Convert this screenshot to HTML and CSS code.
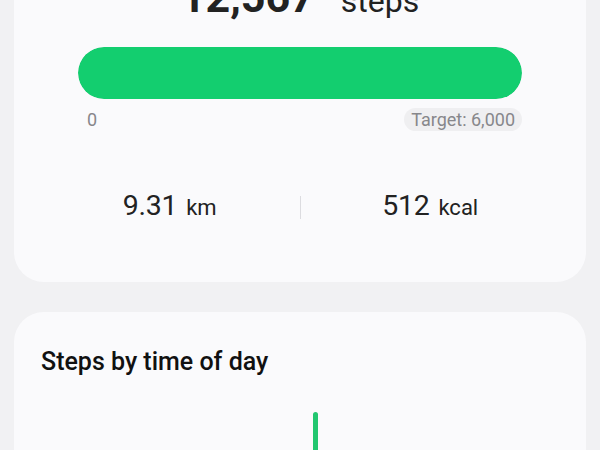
FILE: index.html
```html
<!DOCTYPE html>
<html>
<head>
<meta charset="utf-8">
<link rel="stylesheet" href="styles.css">
</head>
<body>
<div class="screen">
  <section class="card summary">
    <div class="total"><span class="total-num">12,567</span><span class="total-unit">steps</span></div>
    <div class="progress"><div class="progress-fill" style="width:100%"></div></div>
    <div class="scale">
      <span class="scale-min">0</span>
      <span class="target">Target: 6,000</span>
    </div>
    <div class="stats">
      <div class="stat"><span class="stat-num">9.31</span><span class="stat-unit">km</span></div>
      <div class="divider"></div>
      <div class="stat"><span class="stat-num">512</span><span class="stat-unit">kcal</span></div>
    </div>
  </section>
  <section class="card chart-card">
    <h2 class="chart-title">Steps by time of day</h2>
    <div class="chart">
      <div class="bar" style="height:4px"></div>
      <div class="bar" style="height:4px"></div>
      <div class="bar" style="height:4px"></div>
      <div class="bar" style="height:4px"></div>
      <div class="bar" style="height:4px"></div>
      <div class="bar" style="height:4px"></div>
      <div class="bar" style="height:8px"></div>
      <div class="bar" style="height:14px"></div>
      <div class="bar" style="height:20px"></div>
      <div class="bar" style="height:26px"></div>
      <div class="bar" style="height:30px"></div>
      <div class="bar" style="height:24px"></div>
      <div class="bar" style="height:185px"></div>
      <div class="bar" style="height:34px"></div>
      <div class="bar" style="height:22px"></div>
      <div class="bar" style="height:18px"></div>
      <div class="bar" style="height:28px"></div>
      <div class="bar" style="height:36px"></div>
      <div class="bar" style="height:30px"></div>
      <div class="bar" style="height:16px"></div>
      <div class="bar" style="height:10px"></div>
      <div class="bar" style="height:6px"></div>
      <div class="bar" style="height:4px"></div>
      <div class="bar" style="height:4px"></div>
    </div>
  </section>
</div>
</body>
</html>
```
FILE: styles.css
```css
* { box-sizing: border-box; }
html, body {
  margin: 0;
  padding: 0;
  background: #f1f1f3;
  font-family: Roboto, "Noto Sans", sans-serif;
  overflow: hidden;
}
.screen {
  margin-top: -49px;
  padding: 0 14px 40px;
  display: flex;
  flex-direction: column;
  gap: 30px;
}
.card {
  background: #fafafc;
  border-radius: 30px;
}
.summary {
  padding: 20px 0 59px;
}
.total {
  display: flex;
  justify-content: center;
  align-items: baseline;
  gap: 26px;
  line-height: 52px;
  color: #222;
}
.total-num {
  font-size: 43px;
  font-weight: 700;
}
.total-unit {
  font-size: 32px;
  font-weight: 400;
}
.progress {
  margin: 20px 64px 0;
  height: 52px;
  border-radius: 26px;
  background: #e6e6ea;
  overflow: hidden;
}
.progress-fill {
  height: 100%;
  background: #13ce6f;
  border-radius: 26px;
}
.scale {
  margin: 9px 64px 0;
  display: flex;
  justify-content: space-between;
  align-items: center;
  color: #87878b;
  font-size: 18px;
  height: 23px;
}
.scale-min {
  padding-left: 9px;
}
.target {
  background: #efeff1;
  border-radius: 12px;
  height: 23px;
  line-height: 23px;
  padding: 0 7px;
}
.stats {
  margin: 60px 26px 0;
  display: flex;
  align-items: center;
  height: 32px;
}
.stat {
  flex: 1;
  display: flex;
  justify-content: center;
  align-items: baseline;
  gap: 9px;
  color: #222;
  line-height: 32px;
}
.stat-num {
  font-size: 28.5px;
  font-weight: 400;
  letter-spacing: -0.3px;
}
.stat-unit {
  font-size: 22px;
  font-weight: 400;
}
.divider {
  width: 1px;
  height: 23px;
  background: #dcdce0;
}
.chart-card {
  padding: 35px 27px 30px;
}
.chart-title {
  margin: 0;
  font-size: 25px;
  font-weight: 500;
  line-height: 30px;
  color: #111;
}
.chart {
  margin-top: 20px;
  height: 200px;
  padding-left: 10px;
  display: grid;
  grid-template-columns: repeat(24, 1fr);
  align-items: end;
  justify-items: center;
}
.bar {
  width: 5px;
  background: #22c770;
  border-radius: 3px;
}
```
